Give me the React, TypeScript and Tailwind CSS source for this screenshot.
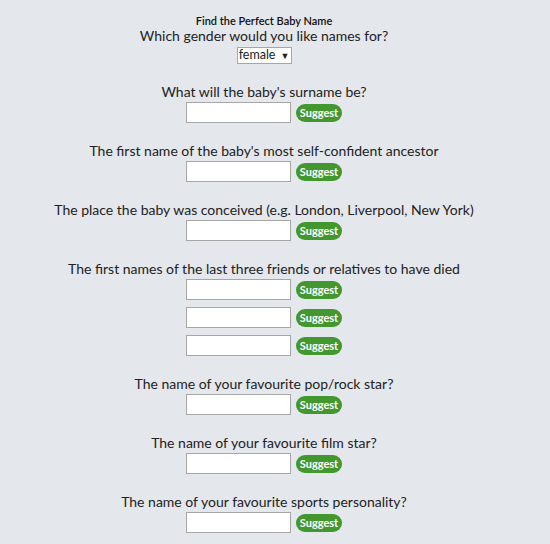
const questions: { label: string; count: number }[] = [
  { label: "What will the baby's surname be?", count: 1 },
  { label: "The first name of the baby's most self-confident ancestor", count: 1 },
  { label: "The place the baby was conceived (e.g. London, Liverpool, New York)", count: 1 },
  { label: "The first names of the last three friends or relatives to have died", count: 3 },
  { label: "The name of your favourite pop/rock star?", count: 1 },
  { label: "The name of your favourite film star?", count: 1 },
  { label: "The name of your favourite sports personality?", count: 1 },
];

function SuggestRow() {
  return (
    <div className="flex items-center justify-center gap-[5px] h-[21px] mt-[2px] [&+&]:mt-[7px]">
      <input
        type="text"
        className="w-[105px] h-[21px] bg-white border border-[#a6a6a6] outline-none"
      />
      <button className="h-[18px] w-[46px] rounded-full bg-[#43972f] text-white text-[11px] font-bold leading-none font-['Lato',sans-serif]">
        Suggest
      </button>
    </div>
  );
}

export default function App() {
  return (
    <div className="min-h-[544px] w-full bg-[#e4e7ec] font-['Lato','Open_Sans',sans-serif] text-[#222]">
      <div className="w-[528px] text-center pt-[14px]">
        <p className="text-[11px] leading-[13px] font-semibold text-[#111]">Find the Perfect Baby Name</p>
        <p className="text-[14px] leading-[17px]">Which gender would you like names for?</p>
        <div className="mt-[3px] flex justify-center">
          <div className="h-[17px] w-[55px] bg-white border border-[#a6a6a6] flex items-center justify-center gap-[5px] text-[12.5px] leading-none">
            <span>female</span>
            <span className="text-[9px]">▼</span>
          </div>
        </div>
        {questions.map((q) => (
          <div key={q.label} className="mt-[19px]">
            <p className="text-[14px] leading-[17px]">{q.label}</p>
            {Array.from({ length: q.count }).map((_, i) => (
              <SuggestRow key={i} />
            ))}
          </div>
        ))}
      </div>
    </div>
  );
}
